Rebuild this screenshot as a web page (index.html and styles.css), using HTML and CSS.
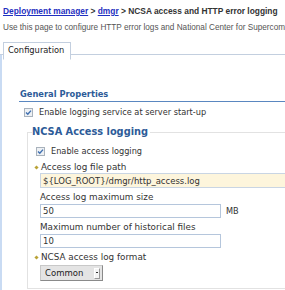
FILE: index.html
```html
<!DOCTYPE html>
<html lang="en">
<head>
  <meta charset="UTF-8">
  <title>NCSA access and HTTP error logging</title>
  <link rel="stylesheet" href="styles.css">
</head>
<body>

  <div class="page">
    <div class="breadcrumb">
      <a href="#">Deployment manager</a> &gt; <a href="#">dmgr</a> &gt; NCSA access and HTTP error logging
    </div>
    <p class="desc">Use this page to configure HTTP error logs and National Center for Supercomputing Applications (NCSA) access logs.</p>

    <div class="tabs">
      <span class="tab">Configuration</span>
    </div>

    <div class="panel">
      <div class="section-title">General Properties</div>

      <div class="check check-top">
        <svg class="box" width="9" height="9" viewBox="0 0 9 9"><rect x="0.5" y="0.5" width="8" height="8" fill="#eef1f4" stroke="#a9b2bc"/><path d="M2 4.5 L3.8 6.3 L7 2.6" fill="none" stroke="#3f6fb0" stroke-width="1.4"/></svg>
        <span>Enable logging service at server start-up</span>
      </div>

      <fieldset class="group">
        <legend>NCSA Access logging</legend>

        <div class="check check-inner">
          <svg class="box" width="9" height="9" viewBox="0 0 9 9"><rect x="0.5" y="0.5" width="8" height="8" fill="#eef1f4" stroke="#a9b2bc"/><path d="M2 4.5 L3.8 6.3 L7 2.6" fill="none" stroke="#3f6fb0" stroke-width="1.4"/></svg>
          <span>Enable access logging</span>
        </div>

        <div class="field first">
          <label class="required" for="path">Access log file path</label>
          <input id="path" class="text long req-input" type="text" value="${LOG_ROOT}/dmgr/http_access.log">
        </div>

        <div class="field">
          <label for="size">Access log maximum size</label>
          <div class="with-unit">
            <input id="size" class="text" type="text" value="50">
            <span class="unit">MB</span>
          </div>
        </div>

        <div class="field">
          <label for="hist">Maximum number of historical files</label>
          <input id="hist" class="text" type="text" value="10">
        </div>

        <div class="field">
          <label class="required" for="format">NCSA access log format</label>
          <div class="select-box">
            <select id="format" class="select">
              <option>Common</option>
              <option>Combined</option>
            </select>
            <span class="select-arrow"></span>
          </div>
        </div>
      </fieldset>
    </div>
  </div>

</body>
</html>
```

FILE: styles.css
```css
body {
  margin: 0;
  font-family: "DejaVu Sans", sans-serif;
  color: #333;
  overflow: hidden;
}
.page {
  width: 520px;
}
.breadcrumb {
  padding: 5px 3px 0;
  font-family: "Liberation Sans", Arial, sans-serif;
  font-size: 8.4px;
  line-height: 12px;
  font-weight: bold;
  color: #333;
  white-space: nowrap;
}
.breadcrumb a {
  color: #1f2fc0;
}
.desc {
  margin: 5px 3px 0;
  font-family: "Liberation Sans", Arial, sans-serif;
  font-size: 8.2px;
  line-height: 12px;
  color: #555;
  white-space: nowrap;
}
.tabs {
  margin-top: 4px;
  border-bottom: 1px solid #c3cfdf;
  padding-left: 3px;
  height: 16px;
}
.tab {
  display: inline-block;
  height: 16px;
  padding: 0 6px 0 4px;
  line-height: 15px;
  font-size: 8.3px;
  color: #222;
  border: 1px solid #c3cfdf;
  border-bottom-color: #fff;
  background: #fff;
}
.panel {
  border-left: 2px solid #c9dbf3;
  padding: 34px 0 0 17px;
  height: 260px;
}
.section-title {
  font-size: 8.3px;
  line-height: 10px;
  font-weight: bold;
  color: #2d5b98;
  padding: 0 0 2px 1px;
  border-bottom: 1px solid #5a87c0;
}
.check {
  display: flex;
  align-items: center;
  height: 10px;
  font-size: 8.2px;
  color: #333;
}
.check-top {
  margin-top: 5px;
  padding-left: 5px;
}
.check-inner {
  margin-top: 8px;
  padding-left: 1px;
}
.box {
  margin-right: 6px;
  flex-shrink: 0;
}
.group {
  margin: 9px 0 0 8px;
  padding: 0 0 7px 7px;
  border: 1px solid #e2e2e2;
  border-right: none;
}
.group legend {
  font-size: 9.8px;
  line-height: 12px;
  font-weight: bold;
  color: #2d5b98;
  padding: 0 2px 0 0;
  margin-left: -3px;
}
.field {
  margin-top: 4px;
  font-size: 8.8px;
}
.field.first {
  margin-top: 6px;
}
.field label {
  display: block;
  line-height: 11px;
  padding-left: 5px;
}
.field label.required {
  padding-left: 0;
}
.required::before {
  content: "";
  display: inline-block;
  width: 3px;
  height: 3px;
  margin: 0 3px 1px 0;
  background: #b9a236;
  transform: rotate(45deg);
}
.text {
  display: block;
  width: 181px;
  height: 14px;
  margin: 1px 0 0 5px;
  padding: 0 2px;
  box-sizing: border-box;
  border: 1px solid #b5c6dc;
  font-family: "DejaVu Sans", sans-serif;
  font-size: 8.5px;
  color: #333;
}
.long {
  width: 300px;
  height: 15px;
  margin-top: 0;
}
.req-input {
  background: #fdf5dc;
  border-color: #c9d5e3;
}
.with-unit {
  display: flex;
  align-items: center;
}
.unit {
  margin-left: 5px;
  font-size: 8.2px;
}
.select-box {
  display: inline-flex;
  align-items: center;
  margin: 2px 0 0 5px;
  height: 16px;
  box-sizing: border-box;
  padding-right: 2px;
  background: #e4e4e4;
  border: 1px solid #8a8a8a;
  border-top-color: #c8c8c8;
  border-left-color: #c8c8c8;
}
.select {
  appearance: none;
  border: none;
  background: transparent;
  padding: 0 5px 0 4px;
  font-family: "DejaVu Sans", sans-serif;
  font-size: 8.5px;
  color: #222;
}
.select-arrow {
  width: 4px;
  height: 9px;
  background: #f4f4f4;
  border: 1px solid #999;
  border-top-color: #fff;
  border-left-color: #fff;
  position: relative;
}
.select-arrow::after {
  content: "";
  position: absolute;
  left: 1px;
  top: 3px;
  width: 2px;
  height: 1px;
  background: #333;
}
```
